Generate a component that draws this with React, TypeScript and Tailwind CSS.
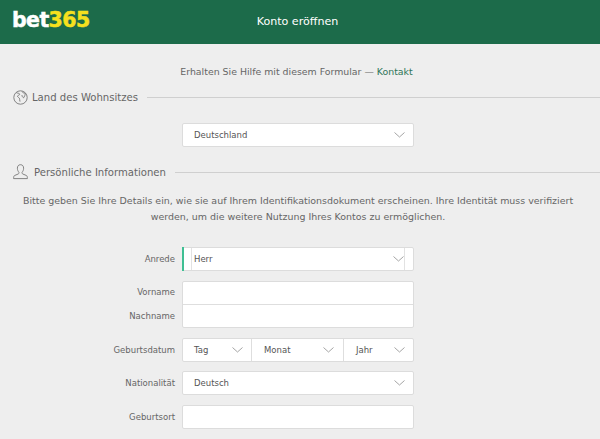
import React from "react";

const font = "[font-family:'DejaVu_Sans',Verdana,sans-serif]";

function Chevron({ className = "" }: { className?: string }) {
  return (
    <svg width="11" height="6" viewBox="0 0 11 6" fill="none" stroke="#9a9a9a" strokeWidth="0.9" className={className}>
      <path d="M0.5 0.5 L5.5 5 L10.5 0.5" />
    </svg>
  );
}

function GlobeIcon() {
  return (
    <svg width="15" height="15" viewBox="0 0 15 15" fill="none" stroke="#777" strokeWidth="0.9">
      <circle cx="7.5" cy="7.5" r="6.7" />
      <path d="M3.2 2.6 C4.6 3.4 6 3 6.6 3.9 C7.2 4.9 5.2 5.2 4.6 5.9 C4 6.6 5.6 7.4 6.4 8.2 C7 8.9 6.4 10.4 7 11.6 M9.2 1.6 C9.4 2.8 11 3 12.4 3.4 C12.2 4.6 11.6 6.6 10.6 7.8 C9.6 7.4 8.8 6 9 5" />
    </svg>
  );
}

function PersonIcon() {
  return (
    <svg width="15" height="16" viewBox="0 0 15 16" fill="none" stroke="#777" strokeWidth="0.9">
      <path d="M7.5 0.7 C5.4 0.7 4.4 2.2 4.4 4.2 C4.4 6 5 7.2 5.8 8.1 C6.2 8.7 6 9.6 5.2 10 L1.6 11.5 C0.8 11.9 0.6 12.8 0.6 14.6 L14.4 14.6 C14.4 12.8 14.2 11.9 13.4 11.5 L9.8 10 C9 9.6 8.8 8.7 9.2 8.1 C10 7.2 10.6 6 10.6 4.2 C10.6 2.2 9.6 0.7 7.5 0.7 Z" />
    </svg>
  );
}

function SectionTitle({ icon, title, gap }: { icon: React.ReactNode; title: string; gap: string }) {
  return (
    <div className="flex items-center pl-[13px] h-[16px]">
      {icon}
      <span className={`${gap} mt-[1px] text-[10.1px] leading-[16px] text-[#666] whitespace-nowrap`}>{title}</span>
      <div className="flex-1 h-[1px] bg-[#cfcfcf] ml-[9px]" />
    </div>
  );
}

function Row({ label, children, className = "" }: { label: string; children: React.ReactNode; className?: string }) {
  return (
    <div className={`flex items-center ${className}`}>
      <div className="w-[175px] text-right text-[8.5px] text-[#666] whitespace-nowrap">{label}</div>
      <div className="ml-[7px] w-[232px]">{children}</div>
    </div>
  );
}

const box = "bg-white border border-[#dcdcdc] rounded-[2px]";

function SelectBox({ value, className = "" }: { value: string; className?: string }) {
  return (
    <div className={`${box} h-[24px] flex items-center justify-between pl-[11px] pr-[8px] text-[8.5px] text-[#555] ${className}`}>
      <span>{value}</span>
      <Chevron />
    </div>
  );
}

export default function App() {
  return (
    <div className={`${font} w-[600px] h-[439px] overflow-hidden bg-[#eeeeee]`}>
      <header className="relative h-[44px] bg-[#1c6b4a] flex items-center justify-center">
        <div className="absolute left-[12px] top-[8px] text-[20.5px] leading-[24px] font-bold tracking-[-0.6px] text-white [-webkit-text-stroke:0.5px_currentColor]">
          bet<span className="text-[#f6e01e]">365</span>
        </div>
        <span className="text-[11.1px] text-white -ml-[5px]">Konto eröffnen</span>
      </header>

      <p className="mt-[21px] text-center text-[9.4px] leading-[14px] text-[#666] pr-[7px]">
        Erhalten Sie Hilfe mit diesem Formular — <span className="text-[#2e7558]">Kontakt</span>
      </p>

      <div className="mt-[10px]">
        <SectionTitle icon={<GlobeIcon />} title="Land des Wohnsitzes" gap="ml-[4px]" />
      </div>

      <div className="mt-[18px] pl-[182px]">
        <SelectBox value="Deutschland" className="w-[232px]" />
      </div>

      <div className="mt-[17px]">
        <SectionTitle icon={<PersonIcon />} title="Persönliche Informationen" gap="ml-[6px]" />
      </div>

      <p className="mt-[13px] mx-[14px] pr-[4px] text-center text-[9.46px] leading-[16px] text-[#666]">
        Bitte geben Sie Ihre Details ein, wie sie auf Ihrem Identifikationsdokument erscheinen. Ihre Identität muss verifiziert werden, um die weitere Nutzung Ihres Kontos zu ermöglichen.
      </p>

      <Row label="Anrede" className="mt-[22px]">
        <div className={`${box} relative h-[24px] flex`}>
          <div className="absolute -left-px -top-px -bottom-px w-[2px] bg-[#3fbf93]" />
          <div className="ml-[8px] w-[214px] border-x border-[#e2e2e2] flex items-center justify-between pl-[2px] pr-[0px] text-[8.5px] text-[#555]">
            <span>Herr</span>
            <Chevron />
          </div>
        </div>
      </Row>

      <div className="mt-[10px] flex">
        <div className="w-[175px] text-right text-[8.5px] text-[#666]">
          <div className="h-[24px] leading-[23px]">Vorname</div>
          <div className="h-[24px] leading-[23px]">Nachname</div>
        </div>
        <div className={`${box} ml-[7px] w-[232px] h-[47px] flex flex-col`}>
          <div className="h-[23px] border-b border-[#dedede]" />
        </div>
      </div>

      <Row label="Geburtsdatum" className="mt-[9px]">
        <div className={`${box} h-[24px] flex text-[8.5px] text-[#555]`}>
          <div className="w-[69px] flex items-center justify-between pl-[11px] pr-[8px] border-r border-[#dedede]">
            <span>Tag</span>
            <Chevron />
          </div>
          <div className="w-[92px] flex items-center justify-between pl-[12px] pr-[9px] border-r border-[#dedede]">
            <span>Monat</span>
            <Chevron />
          </div>
          <div className="flex-1 flex items-center justify-between pl-[12px] pr-[8px]">
            <span>Jahr</span>
            <Chevron />
          </div>
        </div>
      </Row>

      <Row label="Nationalität" className="mt-[9px]">
        <SelectBox value="Deutsch" />
      </Row>

      <Row label="Geburtsort" className="mt-[10px]">
        <div className={`${box} h-[24px]`} />
      </Row>
    </div>
  );
}
